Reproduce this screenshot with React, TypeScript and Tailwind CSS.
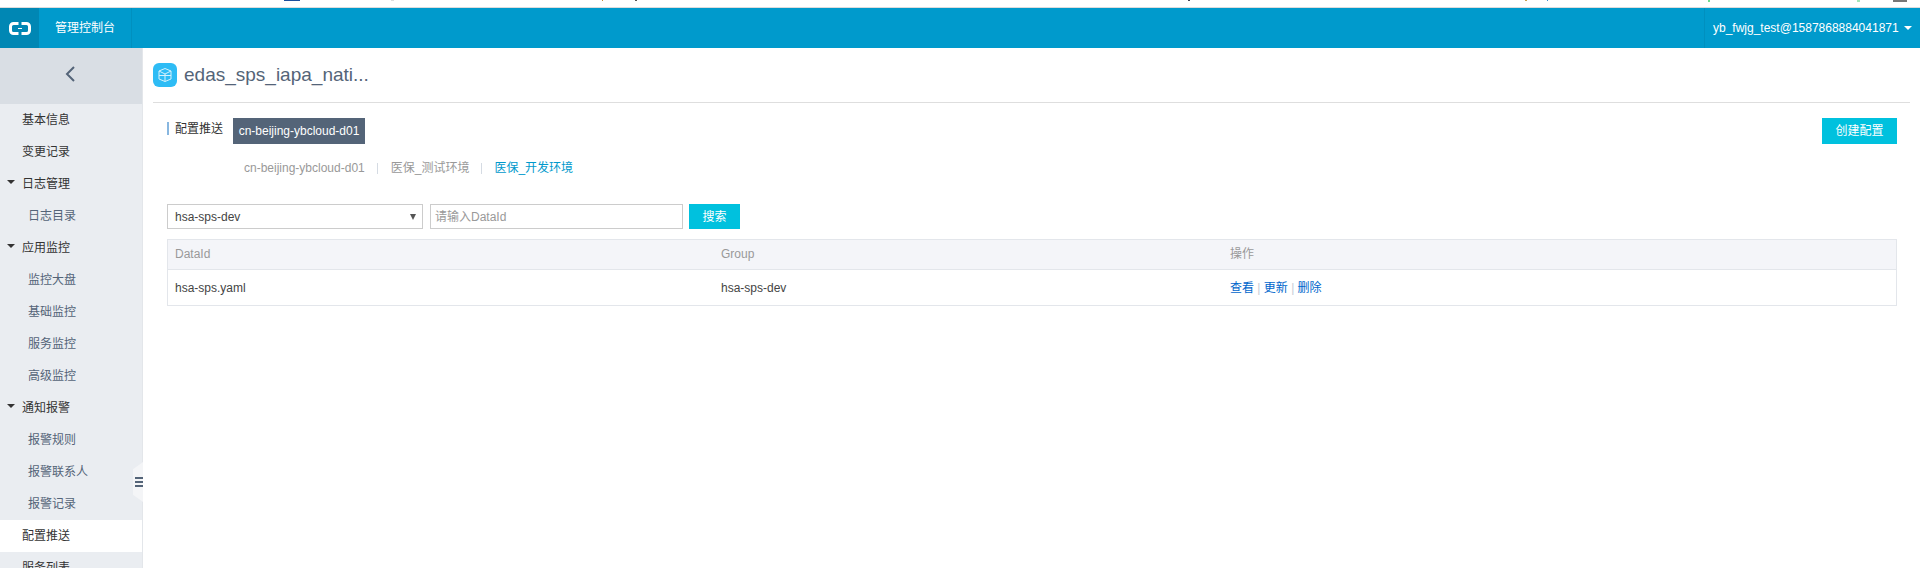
import React from 'react';

const FONT = "font-['Liberation_Sans','Noto_Sans_CJK_SC',sans-serif]";

const menu = [
  { label: '基本信息' },
  { label: '变更记录' },
  { label: '日志管理', group: true },
  { label: '日志目录', sub: true },
  { label: '应用监控', group: true },
  { label: '监控大盘', sub: true },
  { label: '基础监控', sub: true },
  { label: '服务监控', sub: true },
  { label: '高级监控', sub: true },
  { label: '通知报警', group: true },
  { label: '报警规则', sub: true },
  { label: '报警联系人', sub: true },
  { label: '报警记录', sub: true },
  { label: '配置推送', active: true },
  { label: '服务列表' },
];

function Logo() {
  return (
    <svg width="22" height="13" viewBox="0 0 22 13" fill="none">
      <path d="M9.5 1.5H4.5a3 3 0 0 0-3 3v4a3 3 0 0 0 3 3h5" stroke="#fff" strokeWidth="3" />
      <path d="M12.5 1.5h5a3 3 0 0 1 3 3v4a3 3 0 0 1-3 3h-5" stroke="#fff" strokeWidth="3" />
      <path d="M9 6.5h4" stroke="#fff" strokeWidth="1" />
    </svg>
  );
}

function CubeIcon() {
  return (
    <div className="w-6 h-6 rounded-[6px] bg-[#2ebcf5] flex items-center justify-center shrink-0">
      <svg width="16" height="16" viewBox="0 0 16 16" fill="none" stroke="#d5f2fd" strokeWidth="1">
        <path d="M8 1.5 14 4v8l-6 2.5L2 12V4z" />
        <path d="M2 4l6 3 6-3M8 7v7.5M2 8.5h12" />
      </svg>
    </div>
  );
}

function Sidebar() {
  return (
    <aside className="relative w-[143px] shrink-0 bg-[#eaedf1] border-r border-[#e3e6ea]">
      <div className="h-[56px] bg-[#d9dee4] flex items-center justify-center pb-[4px] pr-[2px]">
        <svg width="12" height="18" viewBox="0 0 12 18" fill="none">
          <path d="M10 2 3 9l7 7" stroke="#546478" strokeWidth="2" />
        </svg>
      </div>
      <nav className="text-[12px]">
        {menu.map((m) => (
          <div
            key={m.label}
            className={`relative h-[32px] flex items-center ${m.sub ? 'pl-[28px] text-[#546478]' : 'pl-[22px] text-[#333]'} ${m.active ? 'bg-white' : ''}`}
          >
            {m.group && (
              <span className="absolute left-[7px] top-[12px] w-0 h-0 border-x-[4px] border-x-transparent border-t-[4px] border-t-[#333]" />
            )}
            {m.label}
          </div>
        ))}
      </nav>
      <div className="absolute left-[133px] top-[414px] w-[10px] h-[40px] bg-[#f4f5f7] [clip-path:polygon(100%_0,100%_100%,0_82%,0_18%)] flex flex-col justify-center items-end gap-[2px]">
        <span className="w-[8px] h-[2px] bg-[#546478]" />
        <span className="w-[8px] h-[2px] bg-[#546478]" />
        <span className="w-[8px] h-[2px] bg-[#546478]" />
      </div>
    </aside>
  );
}

export default function App() {
  return (
    <div className={`h-[568px] w-[1920px] overflow-hidden bg-white flex flex-col ${FONT}`}>
      {/* cut-off text of the page above, only slivers show */}
      <div className="h-[8px] shrink-0 border-b border-[#dcdcdc] flex items-start">
        <span className="ml-[284px] w-[16px] h-[1px] bg-[#1c4f9c]" />
        <span className="ml-[91px] w-[3px] h-[1px] bg-[#ddd]" />
        <span className="ml-[208px] w-[1px] h-[1px] bg-[#c9882f]" />
        <span className="ml-[32px] w-[2px] h-[1px] bg-[#555]" />
        <span className="ml-[551px] w-[2px] h-[1px] bg-[#445]" />
        <span className="ml-[335px] w-[2px] h-[1px] bg-[#c9a04f]" />
        <span className="ml-[20px] w-[1px] h-[1px] bg-[#3b8fd0]" />
        <span className="ml-[160px] w-[2px] h-[2px] bg-[#6fdc8c]" />
        <span className="ml-[147px] w-[3px] h-[2px] bg-[#a5e6b8]" />
        <span className="ml-[33px] w-[14px] h-[2px] bg-[#777]" />
      </div>

      <header className="h-[40px] shrink-0 bg-[#009ACC] flex items-stretch text-white text-[12px]">
        <div className="w-[39px] bg-[#0087b4] flex items-center justify-center">
          <Logo />
        </div>
        <div className="w-[93px] flex items-center pl-[16px] border-r border-[#0090bf]">管理控制台</div>
        <div className="flex-1" />
        <div className="w-[216px] pl-[8px] flex items-center border-l border-[#0090bf]">
          yb_fwjg_test@1587868884041871
          <span className="ml-[5px] w-0 h-0 border-x-[4px] border-x-transparent border-t-[4px] border-t-white" />
        </div>
      </header>

      <div className="flex-1 flex min-h-0">
        <Sidebar />
        <main className="flex-1 min-w-0 pl-[10px] pr-[10px]">
          <div className="h-[55px] border-b border-[#dedede] flex items-center gap-[7px]">
            <CubeIcon />
            <span className="text-[19px] text-[#546478]">edas_sps_iapa_nati...</span>
          </div>

          <div className="pl-[14px] pr-[13px]">
            <div className="flex items-start mt-[15px] justify-between">
              <div className="flex items-start">
                <div className="mt-[4px] h-[13px] border-l-2 border-[#88b7e0] pl-[6px] text-[12px] leading-[15px] text-[#333] w-[66px]">配置推送</div>
                <div className="h-[26px] w-[132px] bg-[#546478] text-white text-[12px] flex items-center justify-center">cn-beijing-ybcloud-d01</div>
              </div>
              <button className="h-[26px] w-[75px] bg-[#00C1DE] text-white text-[12px]">创建配置</button>
            </div>

            <div className="mt-[16px] ml-[77px] flex items-center text-[12px] h-[16px]">
              <span className="text-[#999]">cn-beijing-ybcloud-d01</span>
              <span className="ml-[12px] mr-[13px] h-[11px] border-l border-[#d5dbe3]" />
              <span className="text-[#999]">医保_测试环境</span>
              <span className="mx-[12px] h-[11px] border-l border-[#d5dbe3]" />
              <span className="text-[#0099cc]">医保_开发环境</span>
            </div>

            <div className="mt-[28px] flex items-stretch h-[25px] text-[12px]">
              <div className="w-[256px] border border-[#ccc] flex items-center justify-between pl-[7px] pr-[6px] text-[#444]">
                hsa-sps-dev
                <span className="w-0 h-0 border-x-[3px] border-x-transparent border-t-[6px] border-t-[#555]" />
              </div>
              <input
                placeholder="请输入DataId"
                className="ml-[7px] w-[253px] border border-[#ccc] px-[4px] outline-none placeholder:text-[#999]"
              />
              <button className="ml-[6px] w-[51px] bg-[#00C1DE] text-white">搜索</button>
            </div>

            <div className="mt-[10px] border border-[#e3e6eb] text-[12px]">
              <div className="h-[30px] pb-[1px] bg-[#f4f5f9] border-b border-[#e3e6eb] grid grid-cols-[546px_509px_1fr] items-center text-[#999] px-[7px]">
                <span>DataId</span>
                <span>Group</span>
                <span>操作</span>
              </div>
              <div className="h-[35px] grid grid-cols-[546px_509px_1fr] items-center text-[#444] px-[7px]">
                <span>hsa-sps.yaml</span>
                <span>hsa-sps-dev</span>
                <span className="text-[#0066cc]">
                  查看 <span className="text-[#c5ccd6]">|</span> 更新 <span className="text-[#c5ccd6]">|</span> 删除
                </span>
              </div>
            </div>
          </div>
        </main>
      </div>
    </div>
  );
}
